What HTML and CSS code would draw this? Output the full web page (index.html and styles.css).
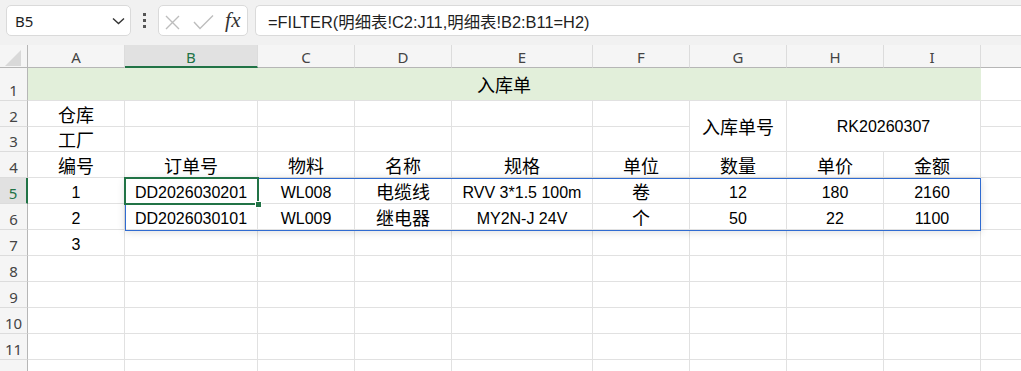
FILE: index.html
```html
<!DOCTYPE html>
<html lang="zh-CN">
<head>
<meta charset="utf-8">
<title>入库单</title>
<link rel="stylesheet" href="styles.css">
</head>
<body>
<div class="app">
  <div class="toolbar">
    <div class="namebox">
      <span class="ref">B5</span>
      <svg class="chev" width="13" height="8" viewBox="0 0 13 8"><path d="M1 1.5 L6.5 6.5 L12 1.5" fill="none" stroke="#333" stroke-width="1.4"/></svg>
    </div>
    <div class="dots"><i></i><i></i><i></i></div>
    <div class="fxbox">
      <svg class="fxicons" width="58" height="31" viewBox="0 0 58 31">
        <path d="M8 11 L21 24 M21 11 L8 24" stroke="#bdbdbd" stroke-width="1.4" fill="none"/>
        <path d="M36 17 L42 23.5 L55 10.5" stroke="#bdbdbd" stroke-width="1.4" fill="none"/>
      </svg>
      <span class="fx">fx</span>
    </div>
    <div class="formula">=FILTER(明细表!C2:J11,明细表!B2:B11=H2)</div>
  </div>

  <div class="sheet">
    <!-- column headers -->
    <div class="h corner"><svg width="16" height="16" viewBox="0 0 16 16"><path d="M16 0 L16 16 L0 16 Z" fill="#d9d9d9"/></svg></div>
    <div class="h">A</div>
    <div class="h sel">B</div>
    <div class="h">C</div>
    <div class="h">D</div>
    <div class="h">E</div>
    <div class="h">F</div>
    <div class="h">G</div>
    <div class="h">H</div>
    <div class="h">I</div>
    <div class="h"></div>

    <!-- row 1 -->
    <div class="r">1</div>
    <div class="c title">入库单</div>
    <div class="c"></div>

    <!-- row 2 -->
    <div class="r">2</div>
    <div class="c">仓库</div>
    <div class="c"></div><div class="c"></div><div class="c"></div><div class="c"></div><div class="c"></div>
    <div class="c m-g">入库单号</div>
    <div class="c n m-hi">RK20260307</div>
    <div class="c"></div>

    <!-- row 3 -->
    <div class="r">3</div>
    <div class="c">工厂</div>
    <div class="c"></div><div class="c"></div><div class="c"></div><div class="c"></div><div class="c"></div>
    <div class="c"></div>

    <!-- row 4 -->
    <div class="r">4</div>
    <div class="c">编号</div>
    <div class="c">订单号</div>
    <div class="c">物料</div>
    <div class="c">名称</div>
    <div class="c">规格</div>
    <div class="c">单位</div>
    <div class="c">数量</div>
    <div class="c">单价</div>
    <div class="c">金额</div>
    <div class="c"></div>

    <!-- row 5 -->
    <div class="r sel">5</div>
    <div class="c n">1</div>
    <div class="c n">DD2026030201</div>
    <div class="c n">WL008</div>
    <div class="c">电缆线</div>
    <div class="c n">RVV 3*1.5 100m</div>
    <div class="c">卷</div>
    <div class="c n">12</div>
    <div class="c n">180</div>
    <div class="c n">2160</div>
    <div class="c"></div>

    <!-- row 6 -->
    <div class="r">6</div>
    <div class="c n">2</div>
    <div class="c n">DD2026030101</div>
    <div class="c n">WL009</div>
    <div class="c">继电器</div>
    <div class="c n">MY2N-J 24V</div>
    <div class="c">个</div>
    <div class="c n">50</div>
    <div class="c n">22</div>
    <div class="c n">1100</div>
    <div class="c"></div>

    <!-- row 7 -->
    <div class="r">7</div>
    <div class="c n">3</div>
    <div class="c"></div><div class="c"></div><div class="c"></div><div class="c"></div><div class="c"></div><div class="c"></div><div class="c"></div><div class="c"></div><div class="c"></div>

    <!-- row 8 -->
    <div class="r">8</div>
    <div class="c"></div><div class="c"></div><div class="c"></div><div class="c"></div><div class="c"></div><div class="c"></div><div class="c"></div><div class="c"></div><div class="c"></div><div class="c"></div>
    <!-- row 9 -->
    <div class="r">9</div>
    <div class="c"></div><div class="c"></div><div class="c"></div><div class="c"></div><div class="c"></div><div class="c"></div><div class="c"></div><div class="c"></div><div class="c"></div><div class="c"></div>
    <!-- row 10 -->
    <div class="r">10</div>
    <div class="c"></div><div class="c"></div><div class="c"></div><div class="c"></div><div class="c"></div><div class="c"></div><div class="c"></div><div class="c"></div><div class="c"></div><div class="c"></div>
    <!-- row 11 -->
    <div class="r">11</div>
    <div class="c"></div><div class="c"></div><div class="c"></div><div class="c"></div><div class="c"></div><div class="c"></div><div class="c"></div><div class="c"></div><div class="c"></div><div class="c"></div>
    <!-- row 12 -->
    <div class="r">12</div>
    <div class="c"></div><div class="c"></div><div class="c"></div><div class="c"></div><div class="c"></div><div class="c"></div><div class="c"></div><div class="c"></div><div class="c"></div><div class="c"></div>

    <div class="spill"></div>
    <div class="active"></div>
    <div class="handle"></div>
  </div>
</div>
</body>
</html>
```

FILE: styles.css
```css
* { box-sizing: border-box; }
html, body { margin: 0; padding: 0; background: #fff; }
body { width: 1021px; height: 371px; overflow: hidden; }

.app { width: 1021px; height: 371px; overflow: hidden; display: flex; flex-direction: column; }

/* ---------- formula bar ---------- */
.toolbar {
  height: 45px;
  flex: none;
  background: #f1f1f1;
  display: flex;
  align-items: flex-start;
  padding: 5px 0 0 6px;
}
.namebox {
  width: 125px;
  height: 31px;
  background: #fff;
  border: 1px solid #dadada;
  border-radius: 5px;
  display: flex;
  align-items: center;
  justify-content: space-between;
  padding: 0 5px 0 8px;
  font: 15px "Noto Sans", "Noto Sans CJK SC", sans-serif;
  color: #1f1f1f;
}
.chev { display: block; }
.dots {
  width: 27px;
  height: 31px;
  display: flex;
  flex-direction: column;
  align-items: center;
  justify-content: center;
  gap: 3px;
}
.dots i { display: block; width: 3px; height: 3px; background: #555; }
.fxbox {
  width: 90px;
  height: 31px;
  background: #fff;
  border: 1px solid #dadada;
  border-radius: 5px;
  display: flex;
  align-items: center;
}
.fxicons { display: block; margin-left: -1px; }
.fx {
  font: italic 21px "Liberation Serif", serif;
  color: #333;
  margin-left: 9px;
  letter-spacing: 0.5px;
  line-height: 31px;
}
.formula {
  flex: 1;
  margin-left: 7px;
  height: 31px;
  background: #fff;
  border: 1px solid #dadada;
  border-right: none;
  border-radius: 5px 0 0 5px;
  display: flex;
  align-items: center;
  padding-left: 12px;
  font: 16.4px "Liberation Sans", "Noto Sans CJK SC", sans-serif;
  color: #1f1f1f;
  white-space: nowrap;
}

/* ---------- sheet ---------- */
.sheet {
  position: relative;
  display: grid;
  grid-template-columns: 28px 97px 133px 97px 97px 141px 97px 97px 97px 97px 97px;
  grid-template-rows: 23px 33px 26px 25px repeat(9, 26px);
  background: #fff;
}

.h {
  background: #f5f5f5;
  border-right: 1px solid #dcdcdc;
  border-bottom: 1px solid #b6b6b6;
  display: flex;
  justify-content: center;
  align-items: flex-start;
  padding-top: 1px;
  font: 15px/22px "Noto Sans", sans-serif;
  color: #444;
}
.h.corner {
  border-right: 1px solid #b6b6b6;
  align-items: center;
  padding: 3px 0 0 0;
}
.h.corner svg { display: block; margin-left: -1px; }
.h.sel {
  background: #e1e1e1;
  border-bottom: 2px solid #217346;
  color: #217346;
}

.r {
  background: #f5f5f5;
  border-right: 1px solid #b6b6b6;
  border-bottom: 1px solid #dcdcdc;
  display: flex;
  justify-content: center;
  align-items: flex-end;
  padding-bottom: 1px;
  font: 15px/18px "Noto Sans", sans-serif;
  color: #444;
}
.r.sel {
  background: #e1e1e1;
  border-right: 2px solid #217346;
  color: #217346;
}

.c {
  border-right: 1px solid #e1e1e1;
  border-bottom: 1px solid #e1e1e1;
  display: flex;
  align-items: center;
  justify-content: center;
  font: 18px/24px "Noto Sans CJK SC", sans-serif;
  color: #000;
  white-space: nowrap;
  overflow: hidden;
}
.c.n {
  font: 16px/20px "Liberation Sans", "Noto Sans CJK SC", sans-serif;
  padding-top: 4px;
}
.c.title {
  grid-column: span 9;
  background: #e2efda;
  border-right-color: #e2efda;
}
.c.m-g { grid-row: span 2; }
.c.m-hi { grid-row: span 2; grid-column: span 2; padding-top: 2px; }

/* ---------- overlays ---------- */
.spill {
  position: absolute;
  left: 125px;
  top: 133px;
  width: 856px;
  height: 53px;
  border: 1px solid #2f6bd1;
  box-shadow: 0 1px 8px rgba(0, 0, 0, 0.14);
  pointer-events: none;
}
.active {
  position: absolute;
  left: 124px;
  top: 132px;
  width: 135px;
  height: 28px;
  border: 2px solid #217346;
  pointer-events: none;
}
.handle {
  position: absolute;
  left: 255px;
  top: 156px;
  width: 7px;
  height: 7px;
  background: #217346;
  border: 1px solid #fff;
}
```
